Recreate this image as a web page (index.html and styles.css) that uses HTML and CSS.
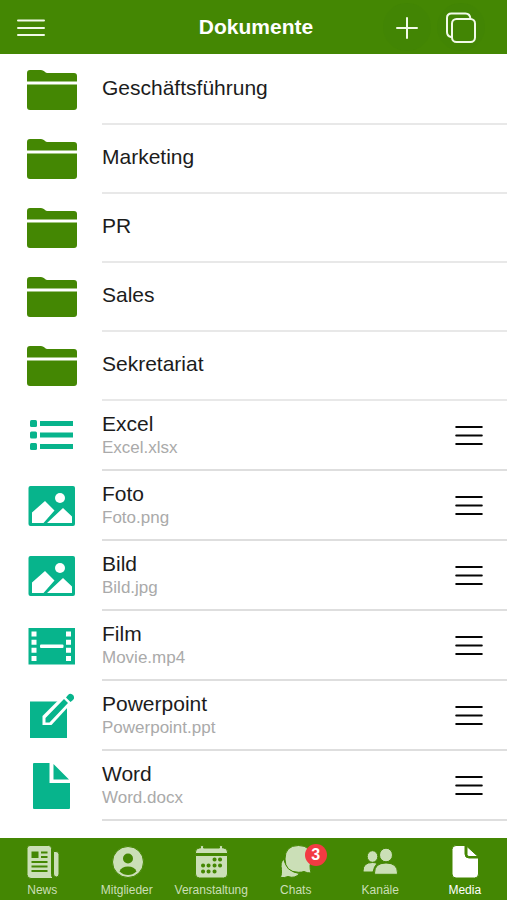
FILE: index.html
```html
<!DOCTYPE html>
<html lang="de">
<head>
<meta charset="utf-8">
<meta name="viewport" content="width=device-width, initial-scale=1">
<title>Dokumente</title>
<link rel="stylesheet" href="styles.css">
</head>
<body>
<svg class="sprite" aria-hidden="true">
  <symbol id="folder" viewBox="0 0 50 40">
    <path d="M0 11.500V3q0-3 3-3h11q2 0 3.500 1.500T20.500 3H47q3 0 3 3v5.500zM0 14.500h50V37q0 3-3 3H3q-3 0-3-3z"/>
  </symbol>
  <symbol id="list" viewBox="0 0 50 50">
    <rect x="3" y="9" width="7" height="7" rx="1.500"/><rect x="3" y="20.500" width="7" height="7" rx="1.500"/><rect x="3" y="32" width="7" height="7" rx="1.500"/>
    <path d="M13 10h33v5H13zM13 21.500h33v5H13zM13 33h33v5H13z"/>
  </symbol>
  <symbol id="image" viewBox="0 0 50 50">
    <rect x="1.500" y="5" width="46.500" height="40" rx="2"/>
    <g class="cut"><circle cx="33" cy="17" r="5"/><path d="M5 42V31.500L18 20l9.500 9.500L16.500 42zM20 42l16-15 9 8.500V42z"/></g>
  </symbol>
  <symbol id="film" viewBox="0 0 50 50">
    <path d="M1.500 7H48v36.500H1.500z"/>
    <path class="cut" d="M4.500 10.500h5v5h-5zM4.500 18.700h5v5h-5zM4.500 26.800h5v5h-5zM4.500 35h5v5h-5zM39 10.500h5v5h-5zM39 18.700h5v5h-5zM39 26.800h5v5h-5zM39 35h5v5h-5z"/>
    <rect class="cut" x="13" y="23.500" width="23.500" height="3.500" rx="1"/>
  </symbol>
  <symbol id="edit" viewBox="0 0 50 50">
    <path d="M3 10.500h37V47H3z"/>
    <path class="cut" d="M15.500 34v-9L39 1.500l8 8L24.500 34z"/>
    <path d="M18.500 31.500V27L37 8l4 4-18.500 19.500zM39 6.500l2-2.500q2-2 4-.7t2 2.700q.5 1.500-1 3l-2.500 2z"/>
  </symbol>
  <symbol id="page" viewBox="0 0 50 50">
    <path d="M6 3q0-1 1-1h15.500v20H43v25q0 1-1 1H7q-1 0-1-1zM26.500 3L42 18.500H26.500z"/>
  </symbol>
  <symbol id="lines" viewBox="0 0 28 22">
    <path d="M1.200 3h25.600M1.200 11.500h25.600M1.200 20h25.600"/>
  </symbol>
</svg>

<header class="topbar">
  <button class="icon-button" type="button" aria-label="Menü"><svg class="menu-icon" viewBox="0 0 30 18"><path d="M2 2.500h26M2 10h26M2 17h26"/></svg></button>
  <h1>Dokumente</h1>
  <div class="actions">
    <button class="icon-button round" type="button" aria-label="Hinzufügen"><svg class="stroke-icon" viewBox="0 0 32 32"><path d="M16 7v20M6 17h20"/></svg></button>
    <button class="icon-button round" type="button" aria-label="Auswählen"><svg class="stroke-icon" viewBox="0 0 32 32"><rect x="7" y="8" width="23" height="23" rx="4.500"/><path d="M7 26H6q-4-1-4-5V7q0-4.500 4.500-4.500h14Q25 2.500 25.500 8"/></svg></button>
  </div>
</header>

<main>
  <ul class="documents">
    <li class="row folder"><svg class="folder-icon"><use href="#folder"/></svg><a class="entry" href="#gf"><span class="name">Geschäftsführung</span></a></li>
    <li class="row folder"><svg class="folder-icon"><use href="#folder"/></svg><a class="entry" href="#marketing"><span class="name">Marketing</span></a></li>
    <li class="row folder"><svg class="folder-icon"><use href="#folder"/></svg><a class="entry" href="#pr"><span class="name">PR</span></a></li>
    <li class="row folder"><svg class="folder-icon"><use href="#folder"/></svg><a class="entry" href="#sales"><span class="name">Sales</span></a></li>
    <li class="row folder"><svg class="folder-icon"><use href="#folder"/></svg><a class="entry" href="#sekretariat"><span class="name">Sekretariat</span></a></li>
    <li class="row file"><svg class="file-icon"><use href="#list"/></svg><div class="entry"><a class="text" href="#excel"><span class="name">Excel</span><span class="filename">Excel.xlsx</span></a><button class="handle" type="button" aria-label="Excel verschieben"><svg><use href="#lines"/></svg></button></div></li>
    <li class="row file"><svg class="file-icon"><use href="#image"/></svg><div class="entry"><a class="text" href="#foto"><span class="name">Foto</span><span class="filename">Foto.png</span></a><button class="handle" type="button" aria-label="Foto verschieben"><svg><use href="#lines"/></svg></button></div></li>
    <li class="row file"><svg class="file-icon"><use href="#image"/></svg><div class="entry"><a class="text" href="#bild"><span class="name">Bild</span><span class="filename">Bild.jpg</span></a><button class="handle" type="button" aria-label="Bild verschieben"><svg><use href="#lines"/></svg></button></div></li>
    <li class="row file"><svg class="file-icon"><use href="#film"/></svg><div class="entry"><a class="text" href="#film-datei"><span class="name">Film</span><span class="filename">Movie.mp4</span></a><button class="handle" type="button" aria-label="Film verschieben"><svg><use href="#lines"/></svg></button></div></li>
    <li class="row file"><svg class="file-icon"><use href="#edit"/></svg><div class="entry"><a class="text" href="#powerpoint"><span class="name">Powerpoint</span><span class="filename">Powerpoint.ppt</span></a><button class="handle" type="button" aria-label="Powerpoint verschieben"><svg><use href="#lines"/></svg></button></div></li>
    <li class="row file"><svg class="file-icon"><use href="#page"/></svg><div class="entry"><a class="text" href="#word"><span class="name">Word</span><span class="filename">Word.docx</span></a><button class="handle" type="button" aria-label="Word verschieben"><svg><use href="#lines"/></svg></button></div></li>
  </ul>
</main>

<nav class="tabs">
  <a href="#news"><svg viewBox="0 0 36 36"><path d="M6 1.500h18.500q3 0 3 3v26q0 3 2 4H7q-4 0-4-4v-26q0-3 3-3z"/><path d="M29.500 7.500H32q3 0 3 3V30q0 3-2.500 3-3 0-3-3z"/><path class="hole" d="M7.500 7.500h7v6.500h-7zM17 7.500h6.500v2H17zM17 12h6.500v2H17zM7.500 17h16v2h-16zM7.500 21.500h16v2h-16zM7.500 26h16v2h-16z"/></svg>News</a>
  <a href="#mitglieder"><svg viewBox="0 0 36 36"><circle cx="19" cy="18" r="15.500"/><circle class="hole" cx="19" cy="14.500" r="5"/><path class="hole" d="M10.500 27.500q2-5 8.500-5t8.500 5q-4 3.500-8.500 3.500t-8.500-3.500z"/></svg>Mitglieder</a>
  <a href="#veranstaltung"><svg viewBox="0 0 36 36"><path d="M2.500 8q0-4 4-4h1V2.500q0-1 1.500-1t1.500 1V4h16V2.500q0-1 1.500-1t1.500 1V4h1q4 0 4 4v1.500h-32zM2.500 11.500h32V30q0 4-4 4h-24q-4 0-4-4z"/><path class="dots" d="M21.500 15.500h.1M27 15.500h.1M10 21.500h.1M15.500 21.500h.1M21.500 21.500h.1M27 21.500h.1M10 27.500h.1M15.500 27.500h.1M21.500 27.500h.1"/></svg>Veranstaltung</a>
  <a href="#chats"><svg viewBox="0 0 36 36"><path d="M5.500 15Q2 19 3.500 25.500q.5 4-1 8 4 .5 7.500-1 7 2.500 11.500-3Q9 28 5.500 15z"/><path d="M20.500 1.500q13 0 13 13 0 4-1.500 7 0 4 1 7.500-4 0-7-1.500-2 .8-5.500.8-13.500-.3-13.500-13.300 0-13.500 13.500-13.500z"/></svg>Chats<span class="badge">3</span></a>
  <a href="#kanaele"><svg viewBox="0 0 36 36"><ellipse cx="10.500" cy="12.500" rx="5.300" ry="5.800"/><path d="M1 27q0-8.500 9.500-8.500 3 0 4.500 1-3 3-4 8.500H2q-1 0-1-1z"/><ellipse cx="24" cy="11" rx="6.500" ry="6.800"/><path d="M12.500 29q0-10 11.500-10t11.500 10q0 1.300-1 1.300h-21q-1 0-1-1.300z"/></svg>Kanäle</a>
  <a class="active" href="#media" aria-current="page"><svg viewBox="0 0 36 36"><path d="M9 1.500h9V10q0 4 4 4h9.500v16q0 4-4 4H9q-4 0-4-4V5.500q0-4 4-4zM20 2.500L31 12.500h-9q-2 0-2-2z"/></svg>Media</a>
</nav>
</body>
</html>
```

FILE: styles.css
```css
* {
  box-sizing: border-box;
}

body {
  margin: 0;
  min-height: 100vh;
  display: flex;
  flex-direction: column;
  background: #fff;
  color: #1c1c1c;
  font-family: "Liberation Sans", Arial, sans-serif;
}

.sprite {
  position: absolute;
  width: 0;
  height: 0;
}

a {
  color: inherit;
  text-decoration: none;
}

button {
  padding: 0;
  border: 0;
  background: none;
  color: inherit;
}

.topbar {
  display: grid;
  grid-template-columns: 1fr auto 1fr;
  align-items: center;
  min-height: 54px;
  padding: 0 22px 0 15px;
  background: #448703;
  color: #fff;
}

.topbar h1 {
  margin: 0;
  padding-left: 12px;
  font-size: 21px;
  line-height: 24px;
}

.icon-button {
  display: flex;
  align-items: center;
  justify-content: center;
  width: 32px;
  height: 46px;
}

.actions {
  display: flex;
  justify-content: flex-end;
  gap: 6px;
}

.round {
  width: 48px;
  height: 48px;
  border-radius: 50%;
  background: #428504;
}

.menu-icon,
.stroke-icon {
  fill: none;
  stroke: #f2fae9;
  stroke-width: 2;
  stroke-linecap: round;
}

.menu-icon {
  width: 30px;
  height: 18px;
}

.stroke-icon {
  width: 32px;
  height: 32px;
}

main {
  flex: 1;
}

.documents {
  margin: 0;
  padding: 2px 0 0;
  list-style: none;
}

.row {
  display: grid;
  grid-template-columns: 102px 1fr;
  align-items: center;
}

.folder {
  height: 69px;
}

.file {
  height: 70px;
}

.entry {
  display: flex;
  align-items: center;
  justify-content: space-between;
  height: 100%;
  padding-right: 24px;
  border-bottom: 2px solid #dedede;
}

.folder .entry {
  padding-bottom: 3px;
  border-color: #e8e8e8;
}

.text {
  padding-top: 2px;
}

.name,
.filename {
  display: block;
}

.name {
  font-size: 21px;
  line-height: 24px;
}

.filename {
  color: #aaa;
  font-size: 17px;
  line-height: 24px;
}

.folder-icon {
  width: 50px;
  height: 40px;
  margin-left: 27px;
  fill: #448703;
}

.folder .folder-icon {
  margin-bottom: 2px;
}

.file-icon {
  width: 50px;
  height: 50px;
  margin-left: 27px;
  fill: #07b48c;
}

.cut {
  fill: #fff;
}

.handle {
  display: flex;
  height: 44px;
  align-items: center;
}

.handle svg {
  width: 28px;
  height: 22px;
  fill: none;
  stroke: #050505;
  stroke-width: 2;
  stroke-linecap: round;
}

.tabs {
  display: grid;
  grid-template-columns: repeat(6, 1fr);
  min-height: 62px;
  padding: 6px 0 2px;
  background: #448703;
  color: #cbdfb7;
  font-size: 12px;
  line-height: 16px;
}

.tabs a {
  position: relative;
  display: flex;
  flex-direction: column;
  align-items: center;
  gap: 2px;
}

.tabs svg {
  width: 36px;
  height: 36px;
  fill: currentColor;
  stroke: #448703;
  stroke-width: 1;
}

.tabs .hole {
  fill: #448703;
  stroke: none;
}

.tabs .dots {
  stroke-width: 4;
  stroke-linecap: round;
}

.tabs .active {
  color: #fff;
}

.badge {
  position: absolute;
  top: 0;
  left: 50%;
  width: 22px;
  height: 22px;
  margin-left: 9px;
  border-radius: 50%;
  background: #f23b42;
  color: #fff;
  font-size: 16px;
  font-weight: bold;
  line-height: 22px;
  text-align: center;
}
```
